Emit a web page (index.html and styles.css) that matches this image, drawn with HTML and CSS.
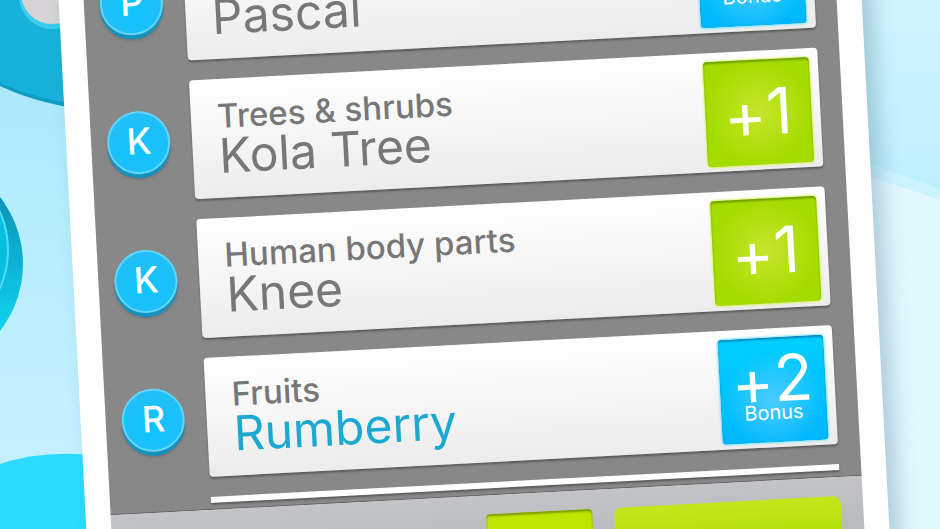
FILE: index.html
```
<!DOCTYPE html>
<html lang="en">
<head>
    <meta charset="UTF-8">
    <title>Round Results</title>
    <link rel="stylesheet" href="styles.css">
</head>
<body>
    <!-- Background shapes -->
    <svg class="backdrop" viewBox="0 0 940 529" preserveAspectRatio="xMidYMid slice" aria-hidden="true">
        <defs>
            <linearGradient id="sky" x1="0" y1="0" x2="0" y2="1">
                <stop offset="0" stop-color="#a4e6fc"/>
                <stop offset="0.5" stop-color="#b9eefe"/>
                <stop offset="1" stop-color="#c8f1fe"/>
            </linearGradient>
            <linearGradient id="ray" x1="0" y1="0" x2="0" y2="1">
                <stop offset="0" stop-color="#d0f4fd"/>
                <stop offset="1" stop-color="#bcf0fd"/>
            </linearGradient>
            <linearGradient id="disc" x1="0" y1="0.2" x2="0" y2="0.8">
                <stop offset="0" stop-color="#0a95b8"/>
                <stop offset="1" stop-color="#10d2f0"/>
            </linearGradient>
        </defs>
        <rect width="470" height="529" fill="url(#sky)"/>
        <rect x="470" width="470" height="529" fill="#e2f8ff"/>
        <path d="M470 0H940V200L860 173V120H470Z" fill="#cdf4fe"/>
        <path d="M470 0H940V189L860 160H470Z" fill="url(#ray)"/>
        <path d="M0 0H100V112Q40 105 0 86Z" fill="#0d9cc2"/>
        <path d="M0 0H100V108Q40 101 0 83Z" fill="#17b2d9"/>
        <circle cx="52" cy="-4" r="33" fill="#3fcdec"/>
        <circle cx="52" cy="-7" r="31" fill="#d5d3d6"/>
        <circle cx="-86" cy="264" r="109" fill="url(#disc)"/>
        <circle cx="-86" cy="250" r="94" fill="#08bede" stroke="#4fdcf4" stroke-width="2"/>
        <path d="M0 464Q45 449 100 456V529H0Z" fill="#2bdcff"/>
    </svg>

    <div class="scene">
        <main class="device">
            <!-- Answers -->
            <ul class="answers">
                <li class="answer">
                    <span class="letter">P</span>
                    <div class="card">
                        <div class="card-text">
                            <p class="category"></p>
                            <p class="word">Pascal</p>
                        </div>
                        <div class="score bonus">
                            <p class="points"></p>
                            <p class="note">Bonus</p>
                        </div>
                    </div>
                </li>
                <li class="answer">
                    <span class="letter">K</span>
                    <div class="card">
                        <div class="card-text">
                            <p class="category">Trees &amp; shrubs</p>
                            <p class="word">Kola Tree</p>
                        </div>
                        <div class="score">
                            <p class="points"><span class="plus">+</span>1</p>
                        </div>
                    </div>
                </li>
                <li class="answer">
                    <span class="letter">K</span>
                    <div class="card">
                        <div class="card-text">
                            <p class="category">Human body parts</p>
                            <p class="word">Knee</p>
                        </div>
                        <div class="score">
                            <p class="points"><span class="plus">+</span>1</p>
                        </div>
                    </div>
                </li>
                <li class="answer">
                    <span class="letter">R</span>
                    <div class="card">
                        <div class="card-text">
                            <p class="category">Fruits</p>
                            <p class="word rare">Rumberry</p>
                        </div>
                        <div class="score bonus">
                            <p class="points"><span class="plus">+</span>2</p>
                            <p class="note">Bonus</p>
                        </div>
                    </div>
                </li>
                <li class="next-card"></li>
            </ul>

            <!-- Bottom bar -->
            <div class="toolbar">
                <div class="total"></div>
                <button class="continue-btn" type="button" aria-label="Continue"></button>
            </div>
        </main>
    </div>
</body>
</html>
```

FILE: styles.css
```
* {
    box-sizing: border-box;
}
body {
    margin: 0;
    height: 100vh;
    overflow: hidden;
    background-color: #c4f0fe;
    font-family: Inter, "Open Sans", sans-serif;
    color: #777;
}
p {
    margin: 0;
}
.backdrop {
    position: absolute;
    width: 100%;
    height: 100%;
}
/* Tilted device */
.scene {
    display: flex;
    justify-content: center;
    align-items: flex-start;
    height: 100vh;
    padding-left: 8px;
    transform: rotate(-3deg);
}
.device {
    width: 86%;
    margin-top: -95px;
    padding: 0 25px;
    background-color: #fff;
    box-shadow: 10px 0 20px rgba(80, 120, 145, 0.35);
}
/* Answers */
.answers {
    list-style: none;
    margin: 0;
    padding: 22px 22px 6px 16px;
    display: flex;
    flex-direction: column;
    gap: 20px;
    background-color: #888;
    border-bottom: 1px solid #666;
}
.answer {
    display: flex;
    align-items: center;
    gap: 22px;
}
.letter {
    flex: none;
    width: 63px;
    height: 63px;
    border-radius: 50%;
    background: radial-gradient(circle at 50% 60%, #0cc4ff, #2bbcf4);
    border: 2px solid #5fd6fb;
    box-shadow: 0 4px 0 #1593bf, 0 5px 3px #5f6f76;
    color: #fff;
    font-size: 36px;
    font-weight: 500;
    line-height: 56px;
    text-align: center;
}
.card {
    flex: 1;
    display: flex;
    justify-content: space-between;
    height: 119px;
    padding: 9px 9px 0 26px;
    border-radius: 4px;
    background: linear-gradient(#fff, #ececec);
    box-shadow: 0 2px 2px #5c5c5c;
}
.category {
    height: 46px;
    padding-top: 10px;
    font-size: 33px;
    font-weight: 500;
    line-height: 36px;
}
.word {
    font-size: 48px;
    line-height: 44px;
}
.rare {
    color: #1ba9d2;
}
.score {
    display: flex;
    flex-direction: column;
    align-items: center;
    width: 106px;
    height: 105px;
    padding-top: 32px;
    border-radius: 4px;
    background: radial-gradient(circle, #c4e62c, #a5dc00 70%);
    box-shadow: inset 0 2px 2px #6f9c08, 0 0 2px 1px #d9f56a;
    color: #fff;
}
.bonus {
    padding-top: 21px;
    background: radial-gradient(circle at 50% 60%, #4cccff, rgba(76, 204, 255, 0) 60%), linear-gradient(#00cfff, #00b6fb);
    box-shadow: inset 0 2px 2px #0e86b8, 0 0 2px 1px #8fe6ff;
}
.points {
    height: 40px;
    font-size: 64px;
    line-height: 40px;
}
.plus {
    display: inline-block;
    vertical-align: -3px;
}
.note {
    font-size: 20px;
    line-height: 28px;
}
.next-card {
    height: 6px;
    margin-left: 85px;
    background-color: #fff;
    box-shadow: 0 2px 2px #5c5c5c;
}
/* Bottom bar */
.toolbar {
    display: flex;
    justify-content: flex-end;
    gap: 22px;
    height: 70px;
    padding: 19px 22px 0;
    background: linear-gradient(#c3c4c8, #b4b5b9);
}
.total {
    width: 106px;
    border-radius: 4px;
    background-color: #bbe600;
    box-shadow: inset 0 2px 2px #7a9c08;
}
.continue-btn {
    width: 227px;
    border: none;
    border-radius: 8px;
    background: linear-gradient(#c2e81c, #aadc00);
    cursor: pointer;
}
```
